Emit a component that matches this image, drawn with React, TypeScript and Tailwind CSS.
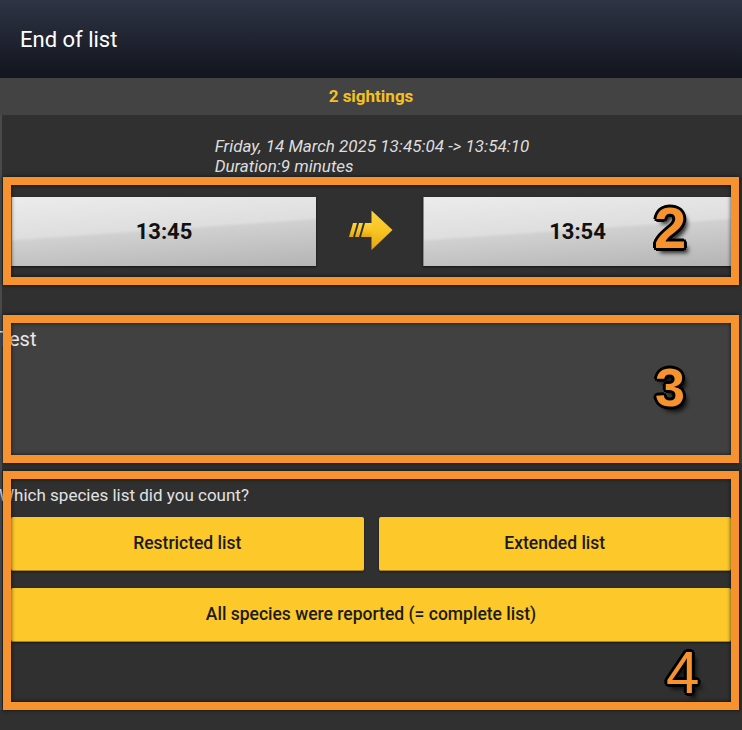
const outline =
  "[text-shadow:3px_0_0_#000,-3px_0_0_#000,0_3px_0_#000,0_-3px_0_#000,2px_2px_0_#000,-2px_-2px_0_#000,2px_-2px_0_#000,-2px_2px_0_#000,4px_5px_4px_rgba(0,0,0,0.8)]";

const Marker = () => (
  <div className="pointer-events-none absolute inset-y-0 left-px right-[3px] border-[8px] border-[#f7932e] shadow-[0_0_4px_rgba(0,0,0,0.7),inset_0_0_4px_rgba(0,0,0,0.7)]" />
);

const Digit = ({ children, className }: { children: string; className: string }) => (
  <span
    className={`pointer-events-none absolute font-['Liberation_Sans',sans-serif] leading-none text-[#f7932e] ${outline} ${className}`}
  >
    {children}
  </span>
);

const TimeButton = ({ label, className }: { label: string; className: string }) => (
  <button
    className={`flex h-[69px] items-center justify-center border-l border-[#8a8a8a] bg-[linear-gradient(176deg,#ececec_0%,#dedede_46%,#d0d0d0_50%,#b4b4b4_100%)] text-[22px] font-bold text-[#111] shadow-[0_1px_2px_rgba(0,0,0,0.6)] ${className}`}
  >
    {label}
  </button>
);

const ArrowIcon = () => (
  <svg width="48" height="42" viewBox="0 0 48 42">
    <defs>
      <linearGradient id="arr" x1="0" y1="0" x2="0" y2="1">
        <stop offset="0" stopColor="#ffd43c" />
        <stop offset="0.55" stopColor="#f7c322" />
        <stop offset="1" stopColor="#e2a514" />
      </linearGradient>
    </defs>
    <g fill="url(#arr)">
      <polygon points="7,13 11,13 7,27 3,27" />
      <polygon points="13,13 17,13 13,27 9,27" />
      <polygon points="19,13 27,13 27,27 15,27" />
      <polygon points="25.5,0.5 46.5,20 25.5,40" />
    </g>
  </svg>
);

const YellowButton = ({ label }: { label: string }) => (
  <button className="flex h-[54px] items-center justify-center rounded-[2px] border-b border-[#a8861a] bg-[#fcc82a] text-[17.5px] font-medium text-[#1b1b1b] shadow-[0_1px_2px_rgba(0,0,0,0.5)]">
    {label}
  </button>
);

export default function App() {
  return (
    <div className="h-[730px] w-[742px] overflow-hidden bg-[#303030] font-['Roboto','Liberation_Sans',sans-serif]">
      <header className="flex h-[78px] items-center bg-gradient-to-b from-[#2f3446] to-[#12151d] px-5">
        <h1 className="text-[22px] text-white">End of list</h1>
      </header>

      <div className="flex h-[37px] items-center justify-center bg-[#434343] text-[17px] font-bold text-[#f4c21d]">
        2 sightings
      </div>

      <main className="border-l-2 border-[#4a4a4a]">
        <div className="flex h-[62px] justify-center pt-[21px]">
          <p className="text-[17px] italic leading-5 text-[#dedede]">
            Friday, 14 March 2025 13:45:04 -&gt; 13:54:10
            <br />
            Duration:9 minutes
          </p>
        </div>

        <section className="relative flex h-[108px] items-center pr-[11px] pl-[9px]">
          <TimeButton label="13:45" className="w-[305px]" />
          <div className="flex w-[107px] justify-center">
            <ArrowIcon />
          </div>
          <TimeButton label="13:54" className="flex-1" />
          <Marker />
          <Digit className="left-[652px] top-[22px] text-[58px] font-bold">2</Digit>
        </section>

        <section className="relative mt-[30px] h-[148px] bg-[#414141] pt-[12px]">
          <p className="-ml-[4px] text-[20px] leading-6 text-[#e8e8e8]">Test</p>
          <Marker />
          <Digit className="left-[653px] top-[45px] text-[54px] font-bold">3</Digit>
        </section>

        <section className="relative mt-[8px] h-[239px] pt-[14px] pr-[11px] pl-[9px]">
          <p className="-ml-[12px] text-[17px] leading-5 text-[#e2e2e2]">
            Which species list did you count?
          </p>
          <div className="mt-[12px] grid grid-cols-2 gap-[15px]">
            <YellowButton label="Restricted list" />
            <YellowButton label="Extended list" />
          </div>
          <div className="mt-[17px] grid">
            <YellowButton label="All species were reported (= complete list)" />
          </div>
          <Marker />
          <Digit className="left-[664px] top-[172px] text-[60px]">4</Digit>
        </section>
      </main>
    </div>
  );
}
